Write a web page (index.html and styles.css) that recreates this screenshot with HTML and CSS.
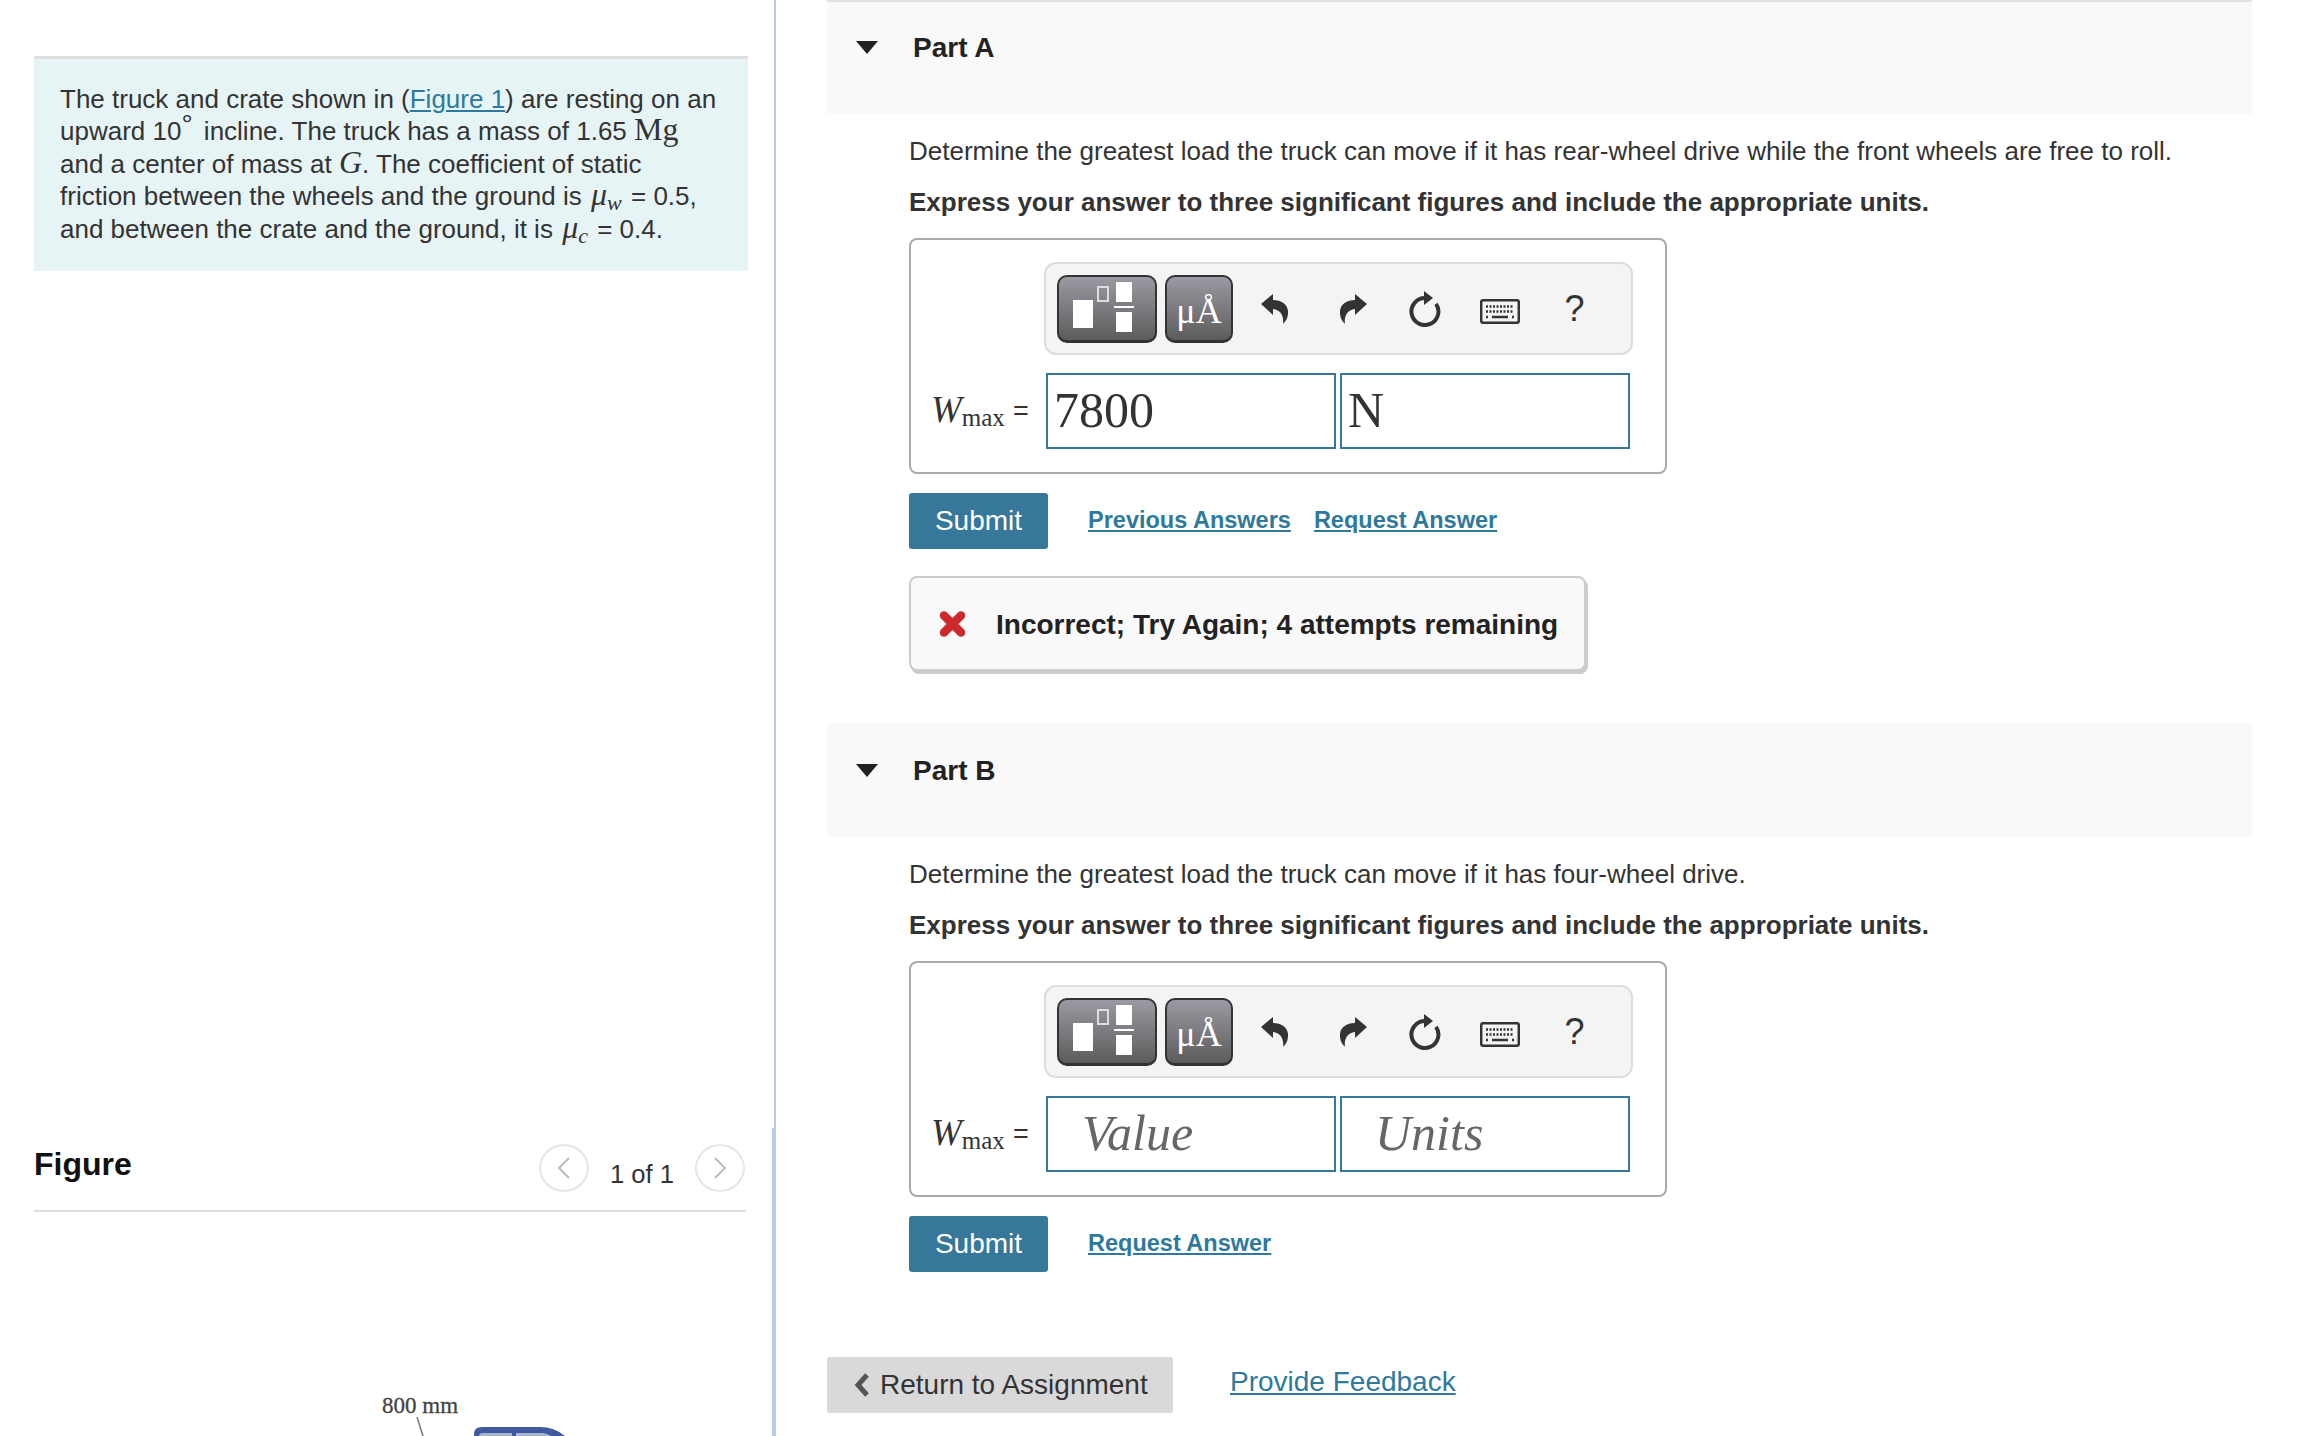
FILE: index.html
```html
<!DOCTYPE html>
<html lang="en">
<head>
    <meta charset="utf-8" />
    <title>Part A - Return to Assignment</title>
    <link rel="stylesheet" href="styles.css">
</head>
<body>
    <div class="left">
        <div class="top">
            <div class="note">
                The truck and crate shown in (<a href="#">Figure 1</a>) are resting on an upward 10<sup class="deg">&deg;</sup> incline. The truck has a mass of 1.65 <span class="m big">Mg</span> and a center of mass at <i class="m big">G</i>. The coefficient of static friction between the wheels and the ground is <i class="m mu">&mu;<sub>w</sub></i> = 0.5, and between the crate and the ground, it is <i class="m mu">&mu;<sub>c</sub></i> = 0.4.
            </div>
        </div>
        <div class="figure">
            <div class="fig-head">
                <span class="fig-title">Figure</span>
                <span class="pager">
                    <span class="circle"><svg width="14" height="22" viewBox="0 0 14 22"><path d="M12 1 L2 11 L12 21" /></svg></span>
                    <span class="count">1 of 1</span>
                    <span class="circle"><svg width="14" height="22" viewBox="0 0 14 22"><path d="M2 1 L12 11 L2 21" /></svg></span>
                </span>
            </div>
            <svg class="truck" width="200" height="42" viewBox="0 0 200 42">
                <text x="2" y="19">800 mm</text>
                <path class="lead" d="M37 23 L43 42" />
                <path class="roof" d="M94 44 V40 Q94 33 102 33 H160 Q176 33 187 44 Z" />
                <path class="glass" d="M99 44 V42 Q99 39 103 39 H132 V44 Z M136 39 H162 Q168 39 174 44 H136 Z" />
            </svg>
        </div>
    </div>

    <div class="right">
        <div class="part">
            <div class="part-head"><i class="tri"></i><span>Part A</span></div>
            <div class="part-body">
                <p>Determine the greatest load the truck can move if it has rear-wheel drive while the front wheels are free to roll.</p>
                <p class="b">Express your answer to three significant figures and include the appropriate units.</p>
                <div class="answer">
                    <div class="toolbar">
                        <span class="tbtn tbtn-tpl">
                            <svg width="100" height="68" viewBox="0 0 100 68">
                                <rect x="16" y="26" width="20" height="28" fill="#fff" />
                                <rect x="41" y="13" width="10" height="14" fill="none" stroke="#ddd" stroke-width="2" />
                                <rect x="59" y="8" width="16" height="20" fill="#fff" />
                                <rect x="57" y="32" width="20" height="2" fill="#fff" />
                                <rect x="59" y="38" width="16" height="20" fill="#fff" />
                            </svg>
                        </span>
                        <span class="tbtn tbtn-unit">&mu;&Aring;</span>
                        <span class="tool undo"><svg width="27" height="30" viewBox="0 0 27 30"><path d="M0 10 L12 0 V6 C22 6 28 12 27 20 C26.5 25 24 28 22 30 C23 24 21 16 12 15 V21 Z" /></svg></span>
                        <span class="tool redo"><svg width="27" height="30" viewBox="0 0 27 30"><path d="M27 10 L15 0 V6 C5 6 -1 12 0 20 C0.5 25 3 28 5 30 C4 24 6 16 15 15 V21 Z" /></svg></span>
                        <span class="tool"><svg width="32" height="36" viewBox="0 0 32 36"><path class="arc" d="M16 7 A13.5 13.5 0 1 0 27 12.8" /><path d="M15 0 L24 7 L15 14 Z" /></svg></span>
                        <span class="tool kbd"><svg width="40" height="25" viewBox="0 0 40 25"><rect class="kb" x="1.2" y="1.2" width="37.6" height="22.6" rx="2" /><path class="keys" d="M6 7.5 H34 M6 12.5 H34" /><path class="space" d="M6 18 H8 M12 18 H28 M32 18 H34" /></svg></span>
                        <span class="tool help">?</span>
                    </div>
                    <div class="row">
                        <span class="lbl"><i>W</i><sub>max</sub><em>=</em></span>
                        <div class="field">7800</div>
                        <div class="field">N</div>
                    </div>
                </div>
                <div class="actions">
                    <span class="btn">Submit</span>
                    <a href="#">Previous Answers</a>
                    <a href="#">Request Answer</a>
                </div>
                <div class="feedback">
                    <svg width="27" height="26" viewBox="0 0 27 26"><path d="M5 4.5 L22 21.5 M22 4.5 L5 21.5" /></svg>
                    <span>Incorrect; Try Again; 4 attempts remaining</span>
                </div>
            </div>
        </div>

        <div class="part part-b">
            <div class="part-head"><i class="tri"></i><span>Part B</span></div>
            <div class="part-body">
                <p>Determine the greatest load the truck can move if it has four-wheel drive.</p>
                <p class="b">Express your answer to three significant figures and include the appropriate units.</p>
                <div class="answer">
                    <div class="toolbar">
                        <span class="tbtn tbtn-tpl">
                            <svg width="100" height="68" viewBox="0 0 100 68">
                                <rect x="16" y="26" width="20" height="28" fill="#fff" />
                                <rect x="41" y="13" width="10" height="14" fill="none" stroke="#ddd" stroke-width="2" />
                                <rect x="59" y="8" width="16" height="20" fill="#fff" />
                                <rect x="57" y="32" width="20" height="2" fill="#fff" />
                                <rect x="59" y="38" width="16" height="20" fill="#fff" />
                            </svg>
                        </span>
                        <span class="tbtn tbtn-unit">&mu;&Aring;</span>
                        <span class="tool undo"><svg width="27" height="30" viewBox="0 0 27 30"><path d="M0 10 L12 0 V6 C22 6 28 12 27 20 C26.5 25 24 28 22 30 C23 24 21 16 12 15 V21 Z" /></svg></span>
                        <span class="tool redo"><svg width="27" height="30" viewBox="0 0 27 30"><path d="M27 10 L15 0 V6 C5 6 -1 12 0 20 C0.5 25 3 28 5 30 C4 24 6 16 15 15 V21 Z" /></svg></span>
                        <span class="tool"><svg width="32" height="36" viewBox="0 0 32 36"><path class="arc" d="M16 7 A13.5 13.5 0 1 0 27 12.8" /><path d="M15 0 L24 7 L15 14 Z" /></svg></span>
                        <span class="tool kbd"><svg width="40" height="25" viewBox="0 0 40 25"><rect class="kb" x="1.2" y="1.2" width="37.6" height="22.6" rx="2" /><path class="keys" d="M6 7.5 H34 M6 12.5 H34" /><path class="space" d="M6 18 H8 M12 18 H28 M32 18 H34" /></svg></span>
                        <span class="tool help">?</span>
                    </div>
                    <div class="row">
                        <span class="lbl"><i>W</i><sub>max</sub><em>=</em></span>
                        <div class="field empty val">Value</div>
                        <div class="field empty">Units</div>
                    </div>
                </div>
                <div class="actions">
                    <span class="btn">Submit</span>
                    <a href="#">Request Answer</a>
                </div>
            </div>
        </div>

        <div class="foot">
            <span class="back"><svg width="16" height="24" viewBox="0 0 16 24"><path d="M13 2 L4 12 L13 22" /></svg>Return to Assignment</span>
            <a href="#">Provide Feedback</a>
        </div>
    </div>
</body>
</html>
```

FILE: styles.css
```css
* { box-sizing: border-box; }
html, body { height: 100%; }
body { margin: 0; display: flex; height: 1436px; overflow: hidden; background: #fff; color: #333; font-family: "Liberation Sans", Arial, sans-serif; font-size: 26px; }
a { color: #2f7a9c; }

.left { width: 776px; flex: none; display: flex; flex-direction: column; }
.top { height: 1131px; padding: 56px 0 0 34px; border-right: 2px solid #bccbe0; }
.note { width: 714px; padding: 24px 30px 26px 26px; background: #e7f4f6; border-top: 3px solid #dedede; line-height: 32.4px; }
.m { font-family: "Liberation Serif", serif; line-height: 0; }
.big { font-size: 32px; }
.mu { font-size: 32px; padding-left: 2px; padding-right: 2px; }
.note sub { font-size: 22px; line-height: 0; vertical-align: -5px; }
.deg { font-size: 28px; line-height: 0; vertical-align: 6px; margin-right: 4px; }

.figure { flex: 1; padding: 0 26px 0 34px; border-right: 4px solid #bccbe0; }
.fig-head { height: 84px; padding-top: 16px; display: flex; justify-content: space-between; border-bottom: 2px solid #dedede; }
.fig-title { margin-top: 1px; font-size: 32px; font-weight: bold; line-height: 38px; color: #111; }
.pager { display: flex; align-items: flex-start; margin-right: 1px; }
.circle { width: 50px; height: 48px; display: flex; align-items: center; justify-content: center; border: 2px solid #e6e6e6; border-radius: 50%; }
.circle path { fill: none; stroke: #bbb; stroke-width: 2; }
.count { margin: 14px 21px 0 21px; line-height: 32px; font-size: 25.6px; }
.truck { display: block; margin: 182px 0 0 346px; }
.truck text { font-family: "Liberation Serif", serif; font-size: 23px; fill: #444; stroke: #444; stroke-width: 0.3; }
.lead { fill: none; stroke: #777; stroke-width: 1.5; }
.roof { fill: #3f5a9e; }
.glass { fill: #aab3cf; }

.right { flex: 1; padding: 0 60px 0 51px; }
.part-head { height: 114px; padding: 30px 0 0 29px; display: flex; align-items: flex-start; background: #f9f9f9; border-top: 2px solid #e2e2e2; font-size: 28px; font-weight: bold; line-height: 32px; color: #222; }
.part-b .part-head { border-top: 0; padding-top: 32px; }
.tri { width: 0; height: 0; margin: 9px 35px 0 0; border-top: 13px solid #222; border-left: 11px solid transparent; border-right: 11px solid transparent; }
.part-body { padding-left: 82px; }
.part-body p { margin: 19px 0 20px; line-height: 32px; }
.part-body p:first-child { margin-top: 21px; margin-bottom: 19px; }
.part-body .b { font-weight: bold; }
.answer { width: 758px; height: 236px; padding: 22px 0 0 20px; border: 2px solid #aaa; border-radius: 8px; }
.toolbar { width: 589px; height: 93px; margin-left: 113px; padding-left: 11px; display: flex; align-items: center; background: #f4f4f4; border: 2px solid #ddd; border-radius: 12px; }
.tbtn { height: 68px; margin-right: 8px; flex: none; display: flex; align-items: center; justify-content: center; border: 2px solid #333; border-bottom-width: 3px; border-radius: 10px; background: linear-gradient(#9b99a2, #5c5c5c); color: #fff; }
.tbtn-tpl { width: 100px; }
.tbtn-tpl svg { margin: -2px; flex: none; }
.tbtn-unit { width: 68px; margin-right: 4px; font-family: "Liberation Serif", serif; font-size: 36px; padding-top: 6px; }
.tool { width: 75px; flex: none; display: flex; justify-content: center; }
.tool path { fill: #333; }
.tool .arc { fill: none; stroke: #333; stroke-width: 4; }
.tool .kb { fill: none; stroke: #333; stroke-width: 2.5; }
.tool .keys { fill: none; stroke: #333; stroke-width: 2.5; stroke-dasharray: 2 1.5; }
.tool .space { fill: none; stroke: #333; stroke-width: 2.5; }
.redo { padding-left: 8px; }
.kbd { padding-top: 6px; }
.help { font-size: 36px; line-height: 36px; }
.row { margin-top: 18px; display: flex; gap: 4px; }
.lbl { width: 113px; margin-right: -2px; padding-top: 17px; font-family: "Liberation Serif", serif; font-size: 37px; line-height: 40px; white-space: nowrap; }
.lbl sub { font-size: 25px; line-height: 0; vertical-align: -4px; }
.lbl em { font-family: "Liberation Sans", sans-serif; font-style: normal; font-size: 27px; margin-left: 8px; vertical-align: 2px; }
.field { width: 290px; height: 76px; padding-left: 6px; border: 2px solid #37779a; font-family: "Liberation Serif", serif; font-size: 50px; line-height: 70px; }
.empty { padding-left: 33px; font-style: italic; color: #666; }
.val { padding-left: 34px; }
.actions { margin-top: 19px; display: flex; align-items: center; font-size: 23.5px; font-weight: bold; }
.actions a { margin-left: 23px; margin-top: -2px; }
.actions .btn + a { margin-left: 40px; }
.btn { width: 139px; height: 56px; background: #37779a; border-radius: 3px; color: #fff; font-size: 28px; font-weight: normal; line-height: 56px; text-align: center; }
.feedback { width: 677px; height: 95px; margin-top: 27px; padding-left: 28px; display: flex; align-items: center; gap: 30px; background: #f9f9f9; border: 2px solid #ccc; border-radius: 8px; box-shadow: 2px 3px 0 #ccc; font-size: 28px; font-weight: bold; color: #222; }
.feedback span { margin-top: 3px; }
.feedback path { fill: none; stroke: #cc2a2a; stroke-width: 8.5; stroke-linecap: round; }
.part-b { margin-top: 52px; }
.foot { margin-top: 85px; display: flex; align-items: center; gap: 57px; font-size: 28px; }
.foot a { margin-top: -6px; }
.back { width: 346px; height: 56px; padding-left: 27px; display: flex; align-items: center; gap: 10px; background: #d9d9d9; border-radius: 3px; color: #333; }
.back path { fill: none; stroke: #555; stroke-width: 5; }
```
